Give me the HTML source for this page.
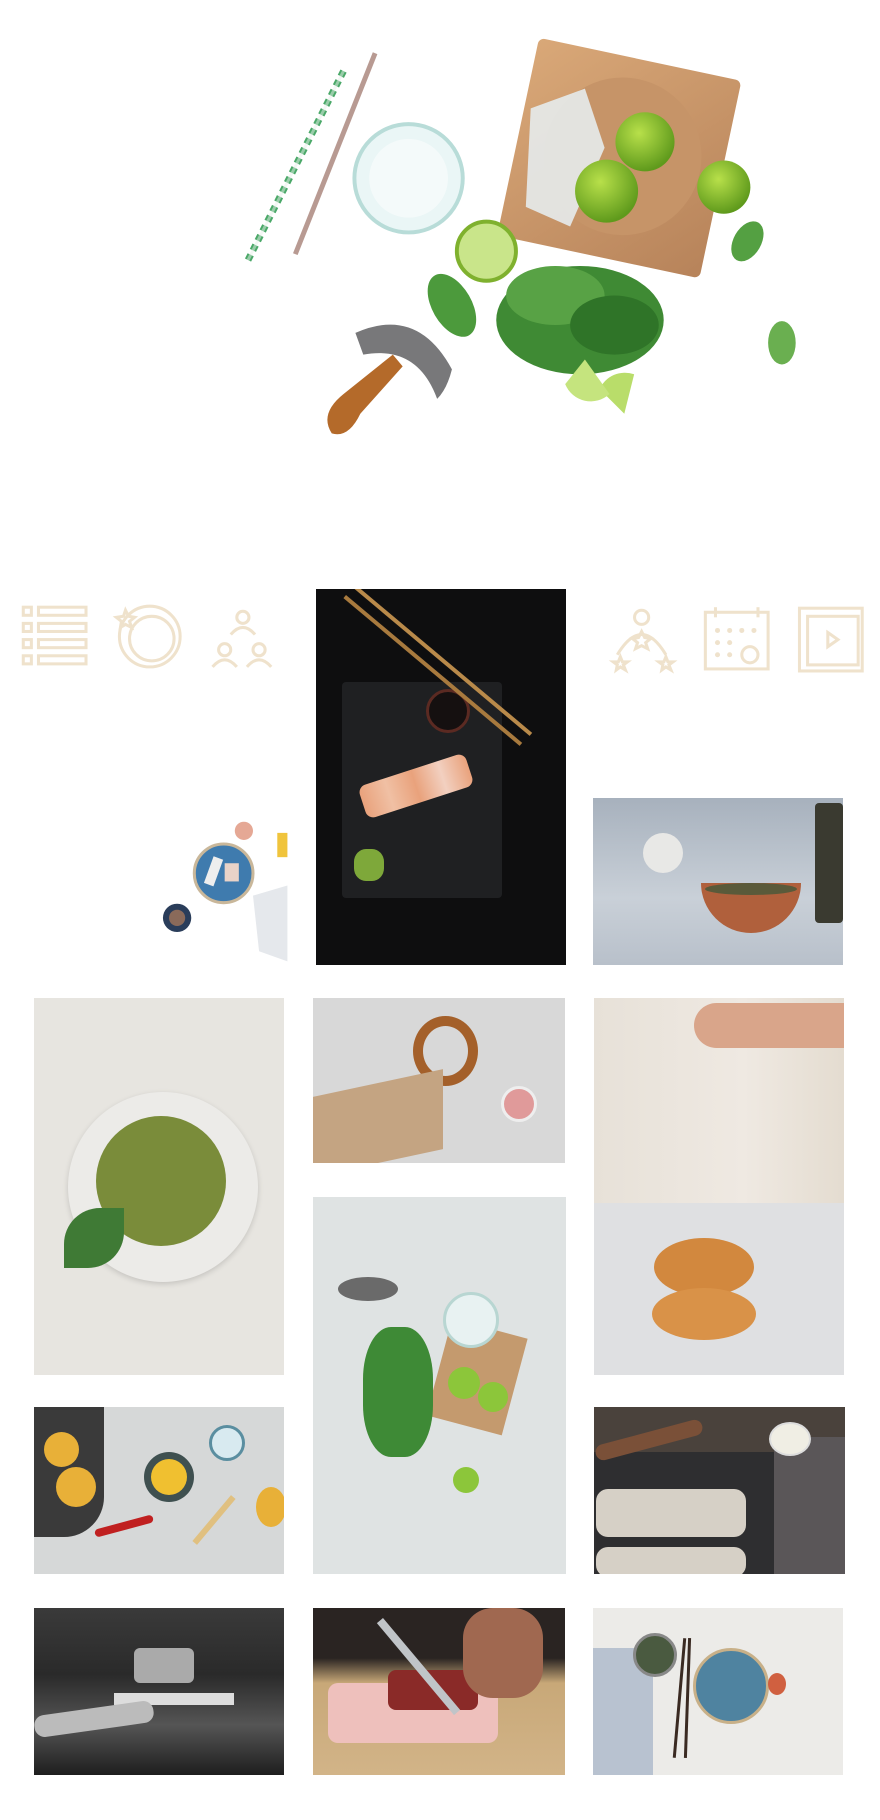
<!DOCTYPE html>
<html><head><meta charset="utf-8"><style>
html,body{margin:0;padding:0;background:#fff;}
body{width:880px;height:1820px;position:relative;overflow:hidden;font-family:"Liberation Sans",sans-serif;}
.p{position:absolute;overflow:hidden;}
</style></head><body>
<svg width="880" height="1820" style="position:absolute;left:0;top:0" xmlns="http://www.w3.org/2000/svg">
<defs>
<radialGradient id="lime" cx="40%" cy="35%" r="65%"><stop offset="0" stop-color="#b8e04a"/><stop offset="1" stop-color="#5f9a1c"/></radialGradient>
<linearGradient id="wood" x1="0" y1="0" x2="1" y2="1"><stop offset="0" stop-color="#d9a878"/><stop offset="1" stop-color="#b7835a"/></linearGradient>
</defs>
<!-- hero -->
<g transform="translate(250,0) scale(0.985) translate(-250,0)">
<line x1="248" y1="264" x2="345" y2="72" stroke="#4aa868" stroke-width="7" stroke-dasharray="6 5"/>
<line x1="248" y1="264" x2="345" y2="72" stroke="#e8f1ea" stroke-width="3" opacity=".5"/>
<line x1="296" y1="258" x2="377" y2="54" stroke="#b89a92" stroke-width="5"/>
<circle cx="411" cy="181" r="55" fill="#eaf6f6" stroke="#b8dcd8" stroke-width="4"/>
<circle cx="411" cy="181" r="40" fill="#f4fafa"/>
<g transform="rotate(12 625 160)"><rect x="520" y="58" width="210" height="205" rx="6" fill="url(#wood)"/><ellipse cx="628" cy="158" rx="80" ry="80" fill="#c69468"/></g>
<path d="M535 110 L590 90 L610 150 L575 230 L530 210 Z" fill="#e6ebec" opacity=".9"/>
<circle cx="651" cy="144" r="30" fill="url(#lime)"/>
<circle cx="612" cy="194" r="32" fill="url(#lime)"/>
<circle cx="731" cy="190" r="27" fill="url(#lime)"/>
<circle cx="490" cy="255" r="30" fill="#c9e58a" stroke="#7fb12e" stroke-width="4"/>
<ellipse cx="585" cy="325" rx="85" ry="55" fill="#3f8a34"/>
<ellipse cx="560" cy="300" rx="50" ry="30" fill="#58a245"/>
<ellipse cx="620" cy="330" rx="45" ry="30" fill="#2f7428"/>
<ellipse cx="455" cy="310" rx="20" ry="35" fill="#4c9a3c" transform="rotate(-30 455 310)"/>
<ellipse cx="755" cy="245" rx="14" ry="22" fill="#54a042" transform="rotate(30 755 245)"/>
<ellipse cx="790" cy="348" rx="14" ry="22" fill="#6aaf50"/>
<path d="M605 395 A28 28 0 0 1 640 380 L630 420 Z" fill="#b9dd6a"/>
<path d="M570 390 A28 28 0 0 0 615 400 L590 365 Z" fill="#c5e47e"/>
<path d="M357 338 Q420 310 455 375 Q450 395 440 405 Q420 350 365 360 Z" fill="#78787a"/>
<path d="M333 440 Q320 420 345 400 L395 360 L405 372 L362 420 Q350 445 333 440 Z" fill="#b46a2a"/>
</g>
<g transform="scale(1.012)">
<!-- icons -->
<g transform="translate(0,-3)">
<g fill="none" stroke="#efe2cc" stroke-width="3">
<rect x="23" y="603" width="8" height="8"/><rect x="38" y="603" width="47" height="8"/>
<rect x="23" y="619" width="8" height="8"/><rect x="38" y="619" width="47" height="8"/>
<rect x="23" y="635" width="8" height="8"/><rect x="38" y="635" width="47" height="8"/>
<rect x="23" y="651" width="8" height="8"/><rect x="38" y="651" width="47" height="8"/>
<circle cx="148" cy="632" r="30"/><circle cx="150" cy="634" r="22"/>
<path d="M124 606 l3 6 6 1 -5 4 2 6 -6 -3 -5 3 1 -6 -5 -4 7 -1z"/>
<circle cx="240" cy="613" r="6"/><path d="M228 630 q12 -14 24 0"/>
<circle cx="222" cy="645" r="6"/><path d="M210 662 q12 -14 24 0"/>
<circle cx="256" cy="645" r="6"/><path d="M244 662 q12 -14 24 0"/>
<circle cx="634" cy="613" r="7"/><path d="M610 650 q24 -40 48 0"/>
<path d="M634 627 l3 6 6 1 -5 4 2 6 -6 -3 -6 3 2 -6 -5 -4 6 -1z"/>
<path d="M613 652 l2 5 5 0 -4 3 2 5 -5 -3 -4 3 1 -5 -4 -3 5 0z"/>
<path d="M658 652 l2 5 5 0 -4 3 2 5 -5 -3 -4 3 1 -5 -4 -3 5 0z"/>
<rect x="697" y="608" width="62" height="56"/><line x1="707" y1="603" x2="707" y2="613"/><line x1="749" y1="603" x2="749" y2="613"/>
<circle cx="741" cy="650" r="8"/>
<rect x="790" y="604" width="62" height="62"/><rect x="798" y="612" width="50" height="48"/>
<path d="M818 628 l10 7 -10 7z"/>
</g>
<g fill="#efe2cc"><circle cx="709" cy="626" r="2.5"/><circle cx="721" cy="626" r="2.5"/><circle cx="733" cy="626" r="2.5"/><circle cx="745" cy="626" r="2.5"/><circle cx="709" cy="638" r="2.5"/><circle cx="721" cy="638" r="2.5"/><circle cx="709" cy="650" r="2.5"/><circle cx="721" cy="650" r="2.5"/></g>
</g>
<!-- small dish cluster -->
<g transform="translate(-2,-5)">
<circle cx="223" cy="868" r="29" fill="#3f7bae" stroke="#c9b79a" stroke-width="3"/>
<rect x="208" y="852" width="10" height="28" fill="#eee" transform="rotate(20 213 866)"/>
<rect x="224" y="858" width="14" height="18" fill="#e9d3c8"/>
<circle cx="177" cy="912" r="14" fill="#2a3d5a"/><circle cx="177" cy="912" r="8" fill="#8a6a5a"/>
<circle cx="243" cy="826" r="9" fill="#e5a895"/>
<rect x="276" y="828" width="10" height="24" fill="#f0c43c"/>
<path d="M252 890 L286 880 L286 955 L258 945 Z" fill="#e5e8ec"/>
</g>
</g>
</svg>

<!-- sushi -->
<div class="p" style="left:316px;top:589px;width:250px;height:376px;background:#0e0e0f;">
 <div class="p" style="left:26px;top:93px;width:160px;height:216px;background:#1f2022;border-radius:4px"></div>
 <div class="p" style="left:110px;top:100px;width:38px;height:38px;border-radius:50%;background:#151010;border:3px solid #5b2a22"></div>
 <div class="p" style="left:44px;top:180px;width:112px;height:34px;background:linear-gradient(90deg,#e9a27c,#f0c0a4,#e9a27c,#f2d0c0,#e9a27c);transform:rotate(-18deg);border-radius:8px"></div>
 <div class="p" style="left:38px;top:260px;width:30px;height:32px;background:#7ea83a;border-radius:40%"></div>
 <div class="p" style="width:230px;height:4px;background:#b98a4a;transform:rotate(40deg);transform-origin:0 0;left:40px;top:-4px"></div>
 <div class="p" style="width:230px;height:4px;background:#a87a3e;transform:rotate(40deg);transform-origin:0 0;left:30px;top:6px"></div>
</div>
<!-- spice -->
<div class="p" style="left:593px;top:798px;width:250px;height:167px;background:linear-gradient(180deg,#a7b1bd,#c9d0d8 60%,#b8c0ca);">
 <div class="p" style="left:50px;top:35px;width:40px;height:40px;border-radius:50%;background:#e8e8e6"></div>
 <div class="p" style="left:108px;top:85px;width:100px;height:50px;border-radius:0 0 50px 50px;background:#b0603c"></div>
 <div class="p" style="left:112px;top:85px;width:92px;height:12px;border-radius:50%;background:#5a5a3a"></div>
 <div class="p" style="left:222px;top:5px;width:28px;height:120px;background:#3a3a30;border-radius:4px"></div>
</div>
<!-- pasta -->
<div class="p" style="left:34px;top:998px;width:250px;height:377px;background:#e7e5e0;">
 <div class="p" style="left:34px;top:94px;width:190px;height:190px;border-radius:50%;background:#ecebe8;box-shadow:0 2px 6px rgba(0,0,0,.15)"></div>
 <div class="p" style="left:62px;top:118px;width:130px;height:130px;border-radius:50%;background:#7a8c3a"></div>
 <div class="p" style="left:30px;top:210px;width:60px;height:60px;border-radius:60% 0;background:#3f7a35"></div>
</div>
<!-- pretzel -->
<div class="p" style="left:313px;top:998px;width:252px;height:165px;background:#d8d8d8;">
 <div class="p" style="left:100px;top:18px;width:65px;height:70px;border-radius:50%;border:10px solid #a4602a;box-sizing:border-box"></div>
 <div class="p" style="left:0;top:85px;width:130px;height:80px;background:#c4a482;transform:skewY(-12deg)"></div>
 <div class="p" style="left:188px;top:88px;width:30px;height:30px;border-radius:50%;background:#e09a9a;border:3px solid #eee"></div>
</div>
<!-- donut -->
<div class="p" style="left:594px;top:998px;width:250px;height:377px;background:linear-gradient(90deg,#e7e1d8,#efe9e2 60%,#e4dcd0);">
 <div class="p" style="left:0;top:205px;width:250px;height:172px;background:#dfe0e2"></div>
 <div class="p" style="left:100px;top:5px;width:150px;height:45px;background:#d9a58a;border-radius:30px 0 0 30px"></div>
 <div class="p" style="left:60px;top:240px;width:100px;height:58px;border-radius:50%;background:#d2883e"></div>
 <div class="p" style="left:58px;top:290px;width:104px;height:52px;border-radius:50%;background:#d99248"></div>
</div>
<!-- mojito -->
<div class="p" style="left:313px;top:1197px;width:253px;height:377px;background:#dfe3e3;">
 <div class="p" style="left:125px;top:130px;width:78px;height:100px;background:#c49a6e;transform:rotate(15deg)"></div>
 <div class="p" style="left:135px;top:170px;width:32px;height:32px;border-radius:50%;background:#8cc63a"></div>
 <div class="p" style="left:165px;top:185px;width:30px;height:30px;border-radius:50%;background:#8cc63a"></div>
 <div class="p" style="left:140px;top:270px;width:26px;height:26px;border-radius:50%;background:#8cc63a"></div>
 <div class="p" style="left:50px;top:130px;width:70px;height:130px;border-radius:40%;background:#3e8a36"></div>
 <div class="p" style="left:130px;top:95px;width:50px;height:50px;border-radius:50%;background:#e8f2f2;border:3px solid #b8d6d2"></div>
 <div class="p" style="left:25px;top:80px;width:60px;height:24px;background:#6a6a6a;border-radius:50%"></div>
</div>
<!-- corn -->
<div class="p" style="left:34px;top:1407px;width:250px;height:167px;background:#d6d8d8;">
 <div class="p" style="left:-20px;top:0;width:90px;height:130px;background:#3a3a3a;border-radius:0 0 40px 0"></div>
 <div class="p" style="left:10px;top:25px;width:35px;height:35px;border-radius:50%;background:#e8b038"></div>
 <div class="p" style="left:22px;top:60px;width:40px;height:40px;border-radius:50%;background:#e8b038"></div>
 <div class="p" style="left:110px;top:45px;width:50px;height:50px;border-radius:50%;background:#3f5050"></div>
 <div class="p" style="left:117px;top:52px;width:36px;height:36px;border-radius:50%;background:#f0c030"></div>
 <div class="p" style="left:175px;top:18px;width:30px;height:30px;border-radius:50%;background:#d8eaf0;border:3px solid #5a8ea0"></div>
 <div class="p" style="left:60px;top:115px;width:60px;height:8px;background:#c02020;border-radius:4px;transform:rotate(-15deg)"></div>
 <div class="p" style="left:150px;top:110px;width:60px;height:6px;background:#e0c080;transform:rotate(-50deg)"></div>
 <div class="p" style="left:222px;top:80px;width:30px;height:40px;background:#e8b038;border-radius:50%"></div>
</div>
<!-- bread -->
<div class="p" style="left:594px;top:1407px;width:251px;height:167px;background:#4a423c;">
 <div class="p" style="left:0;top:45px;width:180px;height:122px;background:#2e2e30"></div>
 <div class="p" style="left:2px;top:82px;width:150px;height:48px;background:#d6d0c6;border-radius:12px"></div>
 <div class="p" style="left:2px;top:140px;width:150px;height:30px;background:#d6d0c6;border-radius:12px"></div>
 <div class="p" style="left:180px;top:30px;width:71px;height:137px;background:#5a5658"></div>
 <div class="p" style="left:175px;top:15px;width:38px;height:30px;border-radius:50%;background:#f0eee4;border:2px solid #ddd"></div>
 <div class="p" style="left:0;top:25px;width:110px;height:16px;background:#7a5038;border-radius:8px;transform:rotate(-15deg)"></div>
</div>
<!-- row5 -->
<div class="p" style="left:34px;top:1608px;width:250px;height:167px;background:linear-gradient(180deg,#3a3a3a,#2a2a2a 40%,#555 70%,#1e1e1e);">
 <div class="p" style="left:100px;top:40px;width:60px;height:35px;background:#aaa;border-radius:6px"></div>
 <div class="p" style="left:80px;top:85px;width:120px;height:12px;background:#ddd"></div>
 <div class="p" style="left:0;top:100px;width:120px;height:22px;background:#bbb;border-radius:10px;transform:rotate(-8deg)"></div>
</div>
<div class="p" style="left:313px;top:1608px;width:252px;height:167px;background:linear-gradient(180deg,#2a2422 0,#2a2422 30%,#c8a878 45%,#d2b488);">
 <div class="p" style="left:15px;top:75px;width:170px;height:60px;background:#eec0bc;border-radius:10px"></div>
 <div class="p" style="left:75px;top:62px;width:90px;height:40px;background:#8a2a28;border-radius:8px"></div>
 <div class="p" style="left:150px;top:0;width:80px;height:90px;background:#a06850;border-radius:30px"></div>
 <div class="p" style="left:70px;top:10px;width:120px;height:8px;background:#c0c4c8;transform:rotate(50deg);transform-origin:0 0"></div>
</div>
<div class="p" style="left:593px;top:1608px;width:250px;height:167px;background:#ecebe8;">
 <div class="p" style="left:0;top:40px;width:60px;height:127px;background:#b8c2d0"></div>
 <div class="p" style="left:100px;top:40px;width:70px;height:70px;border-radius:50%;background:#4f83a0;border:3px solid #c8b088"></div>
 <div class="p" style="left:40px;top:25px;width:38px;height:38px;border-radius:50%;background:#4a5a40;border:3px solid #888"></div>
 <div class="p" style="left:85px;top:30px;width:3px;height:120px;background:#3a2a22;transform:rotate(5deg)"></div>
 <div class="p" style="left:93px;top:30px;width:3px;height:120px;background:#3a2a22;transform:rotate(2deg)"></div>
 <div class="p" style="left:175px;top:65px;width:18px;height:22px;border-radius:50%;background:#d06040"></div>
</div>
</body></html>
